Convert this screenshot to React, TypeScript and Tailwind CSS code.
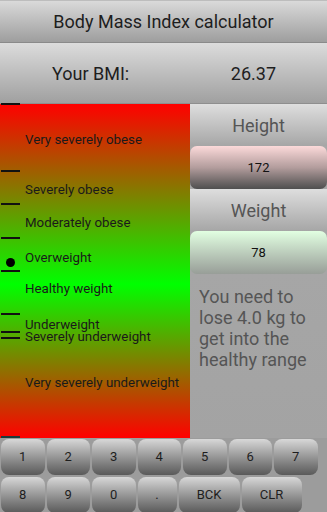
import React from 'react'

const font = { fontFamily: 'Roboto, "Noto Sans", sans-serif' }

const zones = [
  { label: 'Very severely obese', h: 'h-[67px] pt-[4px]' },
  { label: 'Severely obese', h: 'h-[33px] pt-[4px]' },
  { label: 'Moderately obese', h: 'h-[34px] pt-[4px]' },
  { label: 'Overweight', h: 'h-[33px] pt-[6px]', dot: true },
  { label: 'Healthy weight', h: 'h-[43px] pb-[8px]' },
  { label: 'Underweight', h: 'h-[18px] pt-[4px]' },
  { label: 'Severely underweight', h: 'h-[6px] pt-[4px]' },
  { label: 'Very severely underweight', h: 'h-[100px] pb-[10px]' },
]

const Key = ({ label, w }: { label: string; w: string }) => (
  <div
    className={`${w} h-[36px] shrink-0 rounded-[8px] bg-gradient-to-b from-[#d8d8d8] to-[#5a5a5a] flex items-center justify-center text-[13px] text-[#1e1e1e]`}
  >
    {label}
  </div>
)

export default function App() {
  const row1 = ['1', '2', '3', '4', '5', '6', '7']

  return (
    <div className="w-[327px] h-[512px] overflow-hidden bg-[#9c9c9c] flex flex-col" style={font}>
      {/* header */}
      <div className="h-[43px] shrink-0 border-t border-[#bdbdbd] border-b border-b-[#8a8a8a] bg-gradient-to-b from-[#dadada] to-[#9e9e9e] flex items-center justify-center text-[18px] text-[#1e1e1e]">
        Body Mass Index calculator
      </div>
      <div className="h-[61px] shrink-0 border-b border-[#8e8e8e] bg-gradient-to-b from-[#dcdcdc] to-[#a0a0a0] flex items-center justify-between pl-[52px] pr-[51px] text-[18px] text-[#1e1e1e]">
        <span>Your BMI:</span>
        <span>26.37</span>
      </div>

      <div className="flex h-[334px] shrink-0">
        {/* chart */}
        <div className="relative w-[190px] shrink-0 flex flex-col bg-[linear-gradient(to_bottom,#ff0000_0%,#00ff00_54%,#ff0000_100%)]">
          {zones.map((z) => (
            <div key={z.label} className={`relative ${z.h} shrink-0 flex items-center pl-[25px]`}>
              <div className="absolute left-[1px] top-[-1px] w-[19px] h-[2px] bg-[#111]" />
              {z.dot && <div className="absolute left-[6px] top-[20px] w-[9px] h-[9px] rounded-full bg-black" />}
              <span className="whitespace-nowrap text-[13.3px] leading-none text-[#1a1a1a]">{z.label}</span>
            </div>
          ))}
          <div className="absolute left-[1px] bottom-0 w-[19px] h-[2px] bg-[#1d3a3a]" />
        </div>

        {/* right panel */}
        <div className="flex-1 flex flex-col bg-gradient-to-b from-[#a9a9a9] to-[#a3a3a3]">
          <div className="h-[42px] shrink-0 bg-gradient-to-b from-[#dedede] to-[#a6a6a6] flex items-center justify-center text-[18px] text-[#555]">
            Height
          </div>
          <div className="h-[43px] shrink-0 rounded-[7px] bg-gradient-to-b from-[#fcdada] via-[#b39d9d] to-[#4f4f4f] flex items-center justify-center text-[13px] text-[#111]">
            172
          </div>
          <div className="h-[42px] shrink-0 bg-gradient-to-b from-[#dedede] to-[#a6a6a6] flex items-center justify-center text-[18px] text-[#555]">
            Weight
          </div>
          <div className="h-[43px] shrink-0 rounded-[7px] bg-gradient-to-b from-[#e2ffe2] to-[#989e98] flex items-center justify-center text-[13px] text-[#111]">
            78
          </div>
          <div className="pl-[9px] pr-[4px] pt-[12px] text-[18px] leading-[21px] text-[#555]">
            You need to lose 4.0 kg to get into the healthy range
          </div>
        </div>
      </div>

      {/* keypad */}
      <div className="flex-1 flex flex-col gap-[2px] pt-[1px] pl-[1px]">
        <div className="flex gap-[2px]">
          {row1.map((k) => (
            <Key key={k} label={k} w="w-[43.5px]" />
          ))}
        </div>
        <div className="flex gap-[2px]">
          <Key label="8" w="w-[43.5px]" />
          <Key label="9" w="w-[43.5px]" />
          <Key label="0" w="w-[43.5px]" />
          <Key label="." w="w-[39px]" />
          <Key label="BCK" w="w-[61px]" />
          <Key label="CLR" w="w-[60px]" />
        </div>
      </div>
    </div>
  )
}
